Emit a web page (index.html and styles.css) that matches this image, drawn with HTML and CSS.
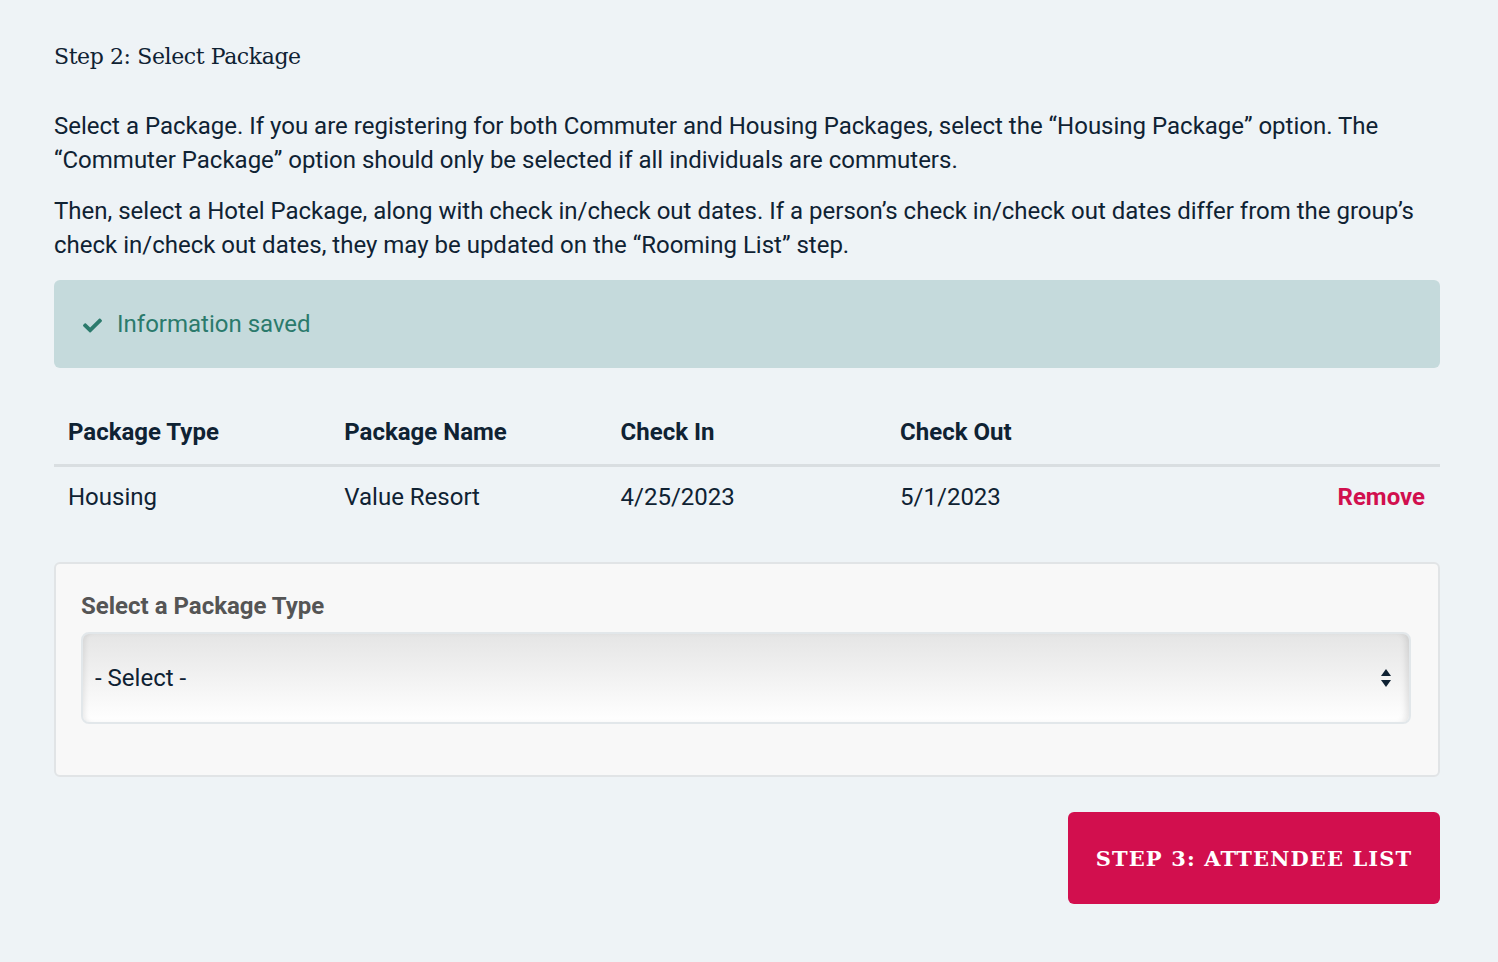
FILE: index.html
```html
<!DOCTYPE html>
<html lang="en">

<head>
    <meta charset="UTF-8">
    <meta name="viewport" content="width=device-width, initial-scale=1.0">
    <title>Step 2: Select Package</title>
    <link rel="stylesheet" href="styles.css">
</head>

<body>
    <div class="container">
        <h2 class="step-title">Step 2: Select Package</h2>

        <p>Select a Package. If you are registering for both Commuter and Housing Packages, select the &ldquo;Housing Package&rdquo; option. The &ldquo;Commuter Package&rdquo; option should only be selected if all individuals are commuters.</p>
        <p>Then, select a Hotel Package, along with check in/check out dates. If a person&rsquo;s check in/check out dates differ from the group&rsquo;s check in/check out dates, they may be updated on the &ldquo;Rooming List&rdquo; step.</p>

        <div class="alert-success">
            <svg class="check-icon" viewBox="0 0 512 512" width="23" height="19">
                <path d="M173.9 439.4 7.5 273c-10-10-10-26.2 0-36.2l36.2-36.2c10-10 26.2-10 36.2 0L192 312.7 432.1 72.6c10-10 26.2-10 36.2 0l36.2 36.2c10 10 10 26.2 0 36.2L210.1 439.4c-10 10-26.2 10-36.2 0z" fill="currentColor" />
            </svg>
            <span>Information saved</span>
        </div>

        <table class="package-table">
            <thead>
                <tr>
                    <th>Package Type</th>
                    <th>Package Name</th>
                    <th>Check In</th>
                    <th>Check Out</th>
                    <th></th>
                </tr>
            </thead>
            <tbody>
                <tr>
                    <td>Housing</td>
                    <td>Value Resort</td>
                    <td>4/25/2023</td>
                    <td>5/1/2023</td>
                    <td class="action"><a href="#" class="remove-link">Remove</a></td>
                </tr>
            </tbody>
        </table>

        <div class="select-panel">
            <label for="packageType">Select a Package Type</label>
            <div class="select-wrap">
                <select id="packageType" name="package_type">
                    <option value="">- Select -</option>
                    <option value="housing">Housing Package</option>
                    <option value="commuter">Commuter Package</option>
                </select>
                <svg class="select-arrows" viewBox="0 0 12 20" width="12" height="20">
                    <path d="M6 1 11 8H1z" fill="currentColor" />
                    <path d="M6 19 1 12h10z" fill="currentColor" />
                </svg>
            </div>
        </div>

        <div class="actions">
            <button type="button" class="btn-next">Step 3: Attendee List</button>
        </div>
    </div>
</body>

</html>
```

FILE: styles.css
```css
body {
    background-color: #eef3f6;
    color: #0f2233;
    font-family: Roboto, Arial, sans-serif;
    margin: 0;
}

.container {
    width: 1386px;
    margin-left: 54px;
    padding-top: 39px;
    padding-bottom: 50px;
}

.step-title {
    font-family: "DejaVu Serif", serif;
    font-weight: normal;
    font-size: 22px;
    line-height: 36px;
    margin: 0 0 34px;
    letter-spacing: -0.4px;
}

p {
    font-size: 24px;
    line-height: 34px;
    margin: 0 0 17px;
}

.alert-success {
    display: flex;
    align-items: center;
    gap: 13px;
    margin-top: 18px;
    height: 88px;
    padding: 0 27px;
    box-sizing: border-box;
    background-color: #c5dadc;
    border-radius: 6px;
    color: #2b7a6c;
    font-size: 24px;
}

.check-icon {
    margin-top: 2px;
}

.package-table {
    width: 100%;
    border-collapse: collapse;
    margin-top: 32px;
    font-size: 24px;
}

.package-table th,
.package-table td {
    width: 277px;
    text-align: left;
    padding: 0 14px;
}

.package-table th {
    height: 64px;
    font-weight: bold;
    border-bottom: 3px solid #d9dee1;
}

.package-table td {
    height: 60px;
}

.package-table .action {
    text-align: right;
    padding-right: 15px;
}

.remove-link {
    color: #d10f4e;
    font-weight: bold;
    text-decoration: none;
}

.select-panel {
    margin-top: 35px;
    background-color: #f8f8f8;
    border: 2px solid #e1e4e6;
    border-radius: 6px;
    padding: 27px 27px 51px 25px;
}

.select-panel label {
    display: block;
    font-size: 24px;
    font-weight: bold;
    color: #555;
    line-height: 30px;
    margin-bottom: 11px;
}

.select-wrap {
    position: relative;
}

.select-wrap select {
    appearance: none;
    -webkit-appearance: none;
    width: 100%;
    height: 92px;
    padding: 0 12px;
    border: 2px solid #e2e7ea;
    border-radius: 8px;
    background: linear-gradient(#e5e5e5, #ffffff);
    box-shadow: inset 5px 0 5px -3px rgba(0, 0, 0, 0.08), inset -6px 0 6px -3px rgba(0, 0, 0, 0.1);
    font-family: Roboto, Arial, sans-serif;
    font-size: 24px;
    color: #0f2233;
}

.select-arrows {
    position: absolute;
    right: 19px;
    top: 36px;
    color: #0f2233;
    pointer-events: none;
}

.actions {
    display: flex;
    justify-content: flex-end;
    margin-top: 35px;
}

.btn-next {
    width: 372px;
    height: 92px;
    background-color: #d20f4e;
    border: none;
    border-radius: 6px;
    color: #ffffff;
    font-family: "DejaVu Serif", serif;
    font-weight: bold;
    font-size: 21px;
    letter-spacing: 1.1px;
    text-transform: uppercase;
    cursor: pointer;
}
```
